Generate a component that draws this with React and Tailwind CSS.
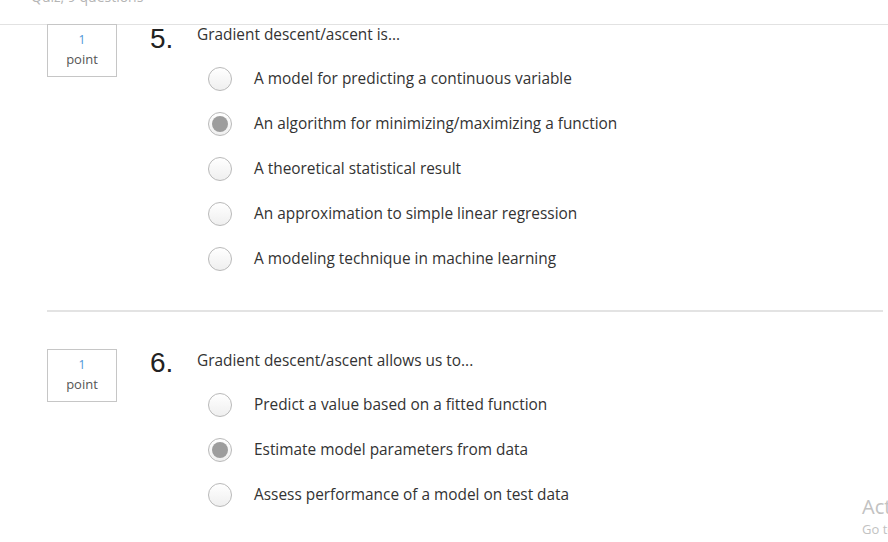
const questions = [
  {
    num: '5.',
    text: 'Gradient descent/ascent is...',
    options: [
      'A model for predicting a continuous variable',
      'An algorithm for minimizing/maximizing a function',
      'A theoretical statistical result',
      'An approximation to simple linear regression',
      'A modeling technique in machine learning',
    ],
    selected: 1,
  },
  {
    num: '6.',
    text: 'Gradient descent/ascent allows us to...',
    options: [
      'Predict a value based on a fitted function',
      'Estimate model parameters from data',
      'Assess performance of a model on test data',
    ],
    selected: 1,
  },
];

function Radio({ checked }) {
  return (
    <span className="w-[24px] h-[24px] rounded-full border border-[#b9b9b9] bg-gradient-to-b from-white to-[#efefef] flex items-center justify-center shrink-0">
      {checked && <span className="w-[16px] h-[16px] rounded-full bg-[#9d9d9d]" />}
    </span>
  );
}

function Question({ q, first }) {
  return (
    <div className="flex">
      <div
        className={`ml-[47px] w-[70px] h-[53px] border border-[#c6c6c6] flex flex-col items-center pt-[5px] ${
          first ? '-mt-px' : ''
        }`}
      >
        <span className="text-[12px] leading-[20px] text-[#4f95d6]">1</span>
        <span className="text-[13px] leading-[18px] text-[#555]">point</span>
      </div>
      <div
        className="ml-[33px] w-[47px] text-[28px] leading-none text-[#222]"
        style={{ fontFamily: '"Liberation Sans", Arial, sans-serif' }}
      >
        {q.num}
      </div>
      <div className="flex flex-col">
        <p className={`${first ? '' : 'pt-[2px]'} text-[15.4px] leading-[20px] text-[#333]`}>{q.text}</p>
        <div className="mt-[11px] ml-[11px] flex flex-col">
          {q.options.map((opt, i) => (
            <div key={opt} className="h-[45px] flex items-center">
              <Radio checked={i === q.selected} />
              <span className="ml-[22px] text-[15.4px] text-[#333]">{opt}</span>
            </div>
          ))}
        </div>
      </div>
    </div>
  );
}

export default function App() {
  return (
    <div
      className="relative w-[888px] h-[542px] overflow-hidden bg-white"
      style={{ fontFamily: '"Open Sans", sans-serif' }}
    >
      <div className="h-[25px] border-b border-[#e2e2e2] overflow-hidden">
        <p className="ml-[31px] -mt-[14px] text-[14px] text-[#b5b5b5]">Quiz, 9 questions</p>
      </div>

      <Question q={questions[0]} first />

      <div className="mt-[29px] ml-[47px] w-[836px] h-[2px] bg-[#e3e3e3]" />

      <div className="mt-[37px]">
        <Question q={questions[1]} />
      </div>

      {/* windows activation watermark */}
      <div className="absolute left-[862px] top-[494px] text-[#c2c2c2] whitespace-nowrap">
        <p className="text-[20px] leading-[26px]">Activate Windows</p>
        <p className="text-[13px] leading-[18px]">Go to Settings to activate Windows.</p>
      </div>
    </div>
  );
}
